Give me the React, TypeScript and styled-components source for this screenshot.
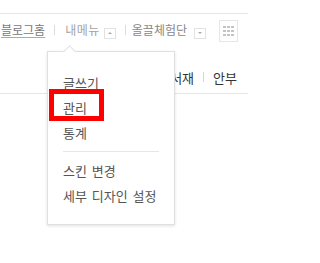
import React from 'react';
import styled, { createGlobalStyle } from 'styled-components';

const GlobalStyle = createGlobalStyle`
  body {
    margin: 0;
    background: #fff;
    font-family: "Noto Sans CJK KR", "Noto Sans", sans-serif;
  }
`;

const MENU = [['글쓰기', '관리', '통계'], ['스킨 변경', '세부 디자인 설정']];

const App = () => {
  return (
    <Page>
      <GlobalStyle />
      <TopRule />
      <NavBar>
        <NavItem $color="#777" $underline>
          블로그홈
        </NavItem>
        <Sep $left={9} $right={10} />
        <NavItem $color="#a3a3a3" $spacing={0.5}>
          내메뉴
        </NavItem>
        <ArrowBox $left={4}>
          <Triangle $dir="up" />
        </ArrowBox>
        <Sep $left={9} $right={6} />
        <NavItem $color="#888">올끌체험단</NavItem>
        <ArrowBox $left={7}>
          <Triangle $dir="down" />
        </ArrowBox>
        <GridButton>
          {Array.from({ length: 9 }).map((_, i) => (
            <Dot key={i} />
          ))}
        </GridButton>
      </NavBar>
      <SubBar>
        <SubLink>서재</SubLink>
        <SubSep />
        <SubLink>안부</SubLink>
      </SubBar>

      <Dropdown>
        {MENU.map((group, gi) => (
          <Group key={gi} $first={gi === 0}>
            {group.map((label) => (
              <MenuItem key={label}>
                {label === '관리' ? <Highlight>{label}</Highlight> : label}
              </MenuItem>
            ))}
          </Group>
        ))}
      </Dropdown>
    </Page>
  );
};

export default App;

const Page = styled.div`
  position: relative;
  width: 248px;
  height: 263px;
  overflow: hidden;
`;

const TopRule = styled.div`
  height: 13px;
  border-bottom: 1px solid #e6e6e6;
`;

const NavBar = styled.div`
  display: flex;
  align-items: center;
  height: 31px;
  padding: 0 0 1px 1px;
`;

const NavItem = styled.span<{ $color: string; $underline?: boolean; $spacing?: number }>`
  font-size: 12px;
  line-height: 14px;
  color: ${(p) => p.$color};
  letter-spacing: ${(p) => p.$spacing ?? 0}px;
  white-space: nowrap;
  text-decoration: ${(p) => (p.$underline ? 'underline' : 'none')};
  text-underline-offset: 2px;
  text-decoration-color: #aaa;
`;

const Sep = styled.span<{ $left: number; $right: number }>`
  flex: none;
  width: 1px;
  height: 10px;
  background: #dcdcdc;
  margin: 0 ${(p) => p.$right}px 0 ${(p) => p.$left}px;
`;

const ArrowBox = styled.span<{ $left: number }>`
  flex: none;
  display: flex;
  align-items: center;
  justify-content: center;
  width: 10px;
  height: 9px;
  border: 1px solid #e2e2e2;
  margin: 7px 0 0 ${(p) => p.$left}px;
`;

const Triangle = styled.span<{ $dir: 'up' | 'down' }>`
  width: 0;
  height: 0;
  border-left: 2px solid transparent;
  border-right: 2px solid transparent;
  ${(p) =>
    p.$dir === 'up'
      ? 'border-bottom: 2px solid #aaa;'
      : 'border-top: 2px solid #aaa;'}
`;

const GridButton = styled.div`
  flex: none;
  margin: 3px 0 0 13px;
  width: 17px;
  height: 20px;
  border: 1px solid #e6e6e6;
  display: grid;
  grid-template-columns: repeat(3, 3px);
  grid-template-rows: repeat(3, 2px);
  gap: 2px 1px;
  align-content: center;
  justify-content: center;
`;

const Dot = styled.span`
  background: #c4c4c4;
`;

const SubBar = styled.div`
  display: flex;
  align-items: flex-end;
  justify-content: flex-end;
  height: 44px;
  padding: 0 11px 3px 0;
  border-bottom: 1px solid #e6e6e6;
`;

const SubLink = styled.span`
  font-size: 13px;
  line-height: 25px;
  color: #333;
`;

const SubSep = styled.span`
  align-self: center;
  width: 1px;
  height: 10px;
  margin: 17px 9px 0;
  background: #d6d6d6;
`;

const Dropdown = styled.div`
  position: absolute;
  left: 47px;
  top: 51px;
  width: 126px;
  padding: 18px 0 16px;
  background: #fff;
  border: 1px solid #e0e0e0;
  box-shadow: 0 1px 3px rgba(0, 0, 0, 0.12);

  &::before {
    content: '';
    position: absolute;
    left: 17px;
    top: -5px;
    width: 8px;
    height: 8px;
    background: #fff;
    border-left: 1px solid #e0e0e0;
    border-top: 1px solid #e0e0e0;
    transform: rotate(45deg);
  }
`;

const Group = styled.div<{ $first: boolean }>`
  margin: 0 15px;
  padding: ${(p) => (p.$first ? '0 0 6px' : '6px 0 0')};
  ${(p) => (p.$first ? 'border-bottom: 1px solid #e6e6e6;' : '')}
`;

const MenuItem = styled.div`
  font-size: 13px;
  line-height: 25px;
  height: 25px;
  word-spacing: 2px;
  color: #555;
  white-space: nowrap;
`;

const Highlight = styled.span`
  position: relative;

  &::after {
    content: '';
    position: absolute;
    left: -14px;
    top: -9px;
    width: 45px;
    height: 22px;
    border: 5px solid #ff0000;
  }
`;
